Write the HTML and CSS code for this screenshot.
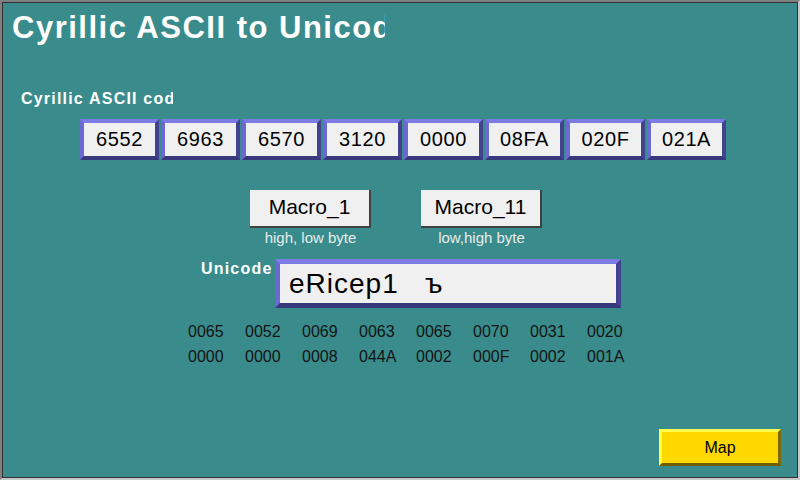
FILE: index.html
```
<!DOCTYPE html>
<html lang="en">
<head>
    <meta charset="UTF-8">
    <meta name="viewport" content="width=device-width, initial-scale=1.0">
    <title>Cyrillic ASCII to Unicode</title>
    <link rel="stylesheet" href="styles.css">
</head>
<body>
    <div class="screen">
        <h1 class="title">Cyrillic ASCII to Unicode</h1>

        <div class="section-label">Cyrillic ASCII code</div>
        <div class="codes">
            <div class="code-box">6552</div>
            <div class="code-box">6963</div>
            <div class="code-box">6570</div>
            <div class="code-box">3120</div>
            <div class="code-box">0000</div>
            <div class="code-box">08FA</div>
            <div class="code-box">020F</div>
            <div class="code-box">021A</div>
        </div>

        <div class="macros">
            <div class="macro">
                <button class="macro-button">Macro_1</button>
                <span class="macro-note">high, low byte</span>
            </div>
            <div class="macro">
                <button class="macro-button">Macro_11</button>
                <span class="macro-note">low,high byte</span>
            </div>
        </div>

        <div class="unicode-row">
            <div class="unicode-label">Unicode</div>
            <div class="unicode-box">eRicep1&nbsp;&nbsp;&nbsp;ъ</div>
        </div>

        <div class="hex-grid">
            <span>0065</span><span>0052</span><span>0069</span><span>0063</span>
            <span>0065</span><span>0070</span><span>0031</span><span>0020</span>
            <span>0000</span><span>0000</span><span>0008</span><span>044A</span>
            <span>0002</span><span>000F</span><span>0002</span><span>001A</span>
        </div>

        <div class="footer">
            <button class="map-button">Map</button>
        </div>
    </div>
</body>
</html>
```

FILE: styles.css
```
body {
    margin: 0;
    padding: 0;
    font-family: "Liberation Sans", Arial, sans-serif;
}
.screen {
    display: flex;
    flex-direction: column;
    width: 800px;
    height: 480px;
    box-sizing: border-box;
    background: #398c8b;
    border: 2px solid;
    border-color: #808080 #c8c8c8 #c8c8c8 #808080;
    box-shadow: inset 1px 1px 0 #303030, inset -1px -1px 0 #303030;
    overflow: hidden;
}
.title {
    width: 373px;
    margin: 9px 0 0 10px;
    font-size: 31px;
    font-weight: bold;
    letter-spacing: 1.5px;
    line-height: 34px;
    color: #ffffff;
    white-space: nowrap;
    overflow: hidden;
}
.section-label {
    width: 152px;
    margin: 46px 0 0 19px;
    font-size: 16px;
    font-weight: bold;
    letter-spacing: 1.2px;
    line-height: 16px;
    color: #ffffff;
    white-space: nowrap;
    overflow: hidden;
}
.codes {
    display: flex;
    gap: 2px;
    margin: 12px 0 0 78px;
}
.code-box {
    width: 79px;
    height: 41px;
    box-sizing: border-box;
    border: 4px solid;
    border-color: #7c7ce4 #42428e #38387c #6a6ad2;
    background: #f0f0f0;
    font-size: 20px;
    letter-spacing: 0.6px;
    line-height: 33px;
    text-align: center;
    color: #000000;
}
.macros {
    display: flex;
    gap: 50px;
    margin: 30px 0 0 248px;
}
.macro {
    display: flex;
    flex-direction: column;
    align-items: center;
    width: 121px;
}
.macro-button {
    width: 121px;
    height: 38px;
    box-sizing: border-box;
    padding: 0 0 2px 0;
    border: none;
    border-right: 2px solid #404040;
    border-bottom: 2px solid #404040;
    background: #f0f0f0;
    font-family: "Liberation Sans", Arial, sans-serif;
    font-size: 21px;
    color: #000000;
}
.macro-note {
    margin-top: 1px;
    font-size: 15px;
    line-height: 18px;
    color: #e6ecec;
}
.unicode-row {
    display: flex;
    align-items: flex-start;
    gap: 2px;
    margin: 12px 0 0 199px;
}
.unicode-label {
    width: 72px;
    margin-top: 2px;
    font-size: 16px;
    font-weight: bold;
    letter-spacing: 1.2px;
    line-height: 16px;
    color: #ffffff;
    white-space: nowrap;
}
.unicode-box {
    width: 346px;
    height: 49px;
    box-sizing: border-box;
    padding-left: 9px;
    border: 5px solid;
    border-color: #7c7ce4 #42428e #38387c #6a6ad2;
    background: #f0f0f0;
    font-size: 28px;
    letter-spacing: 1px;
    line-height: 39px;
    color: #000000;
    white-space: nowrap;
}
.hex-grid {
    display: grid;
    grid-template-columns: repeat(8, 57px);
    row-gap: 7px;
    margin: 15px 0 0 186px;
    font-size: 16px;
    line-height: 18px;
    color: #141414;
}
.footer {
    display: flex;
    justify-content: flex-end;
    margin: auto 17px 12px 0;
}
.map-button {
    width: 122px;
    height: 37px;
    box-sizing: border-box;
    border: 3px solid;
    border-color: #ffff50 #7a6800 #6e5e00 #ffff40;
    background: #ffd800;
    font-family: "Liberation Sans", Arial, sans-serif;
    font-size: 16px;
    color: #000000;
}
```
